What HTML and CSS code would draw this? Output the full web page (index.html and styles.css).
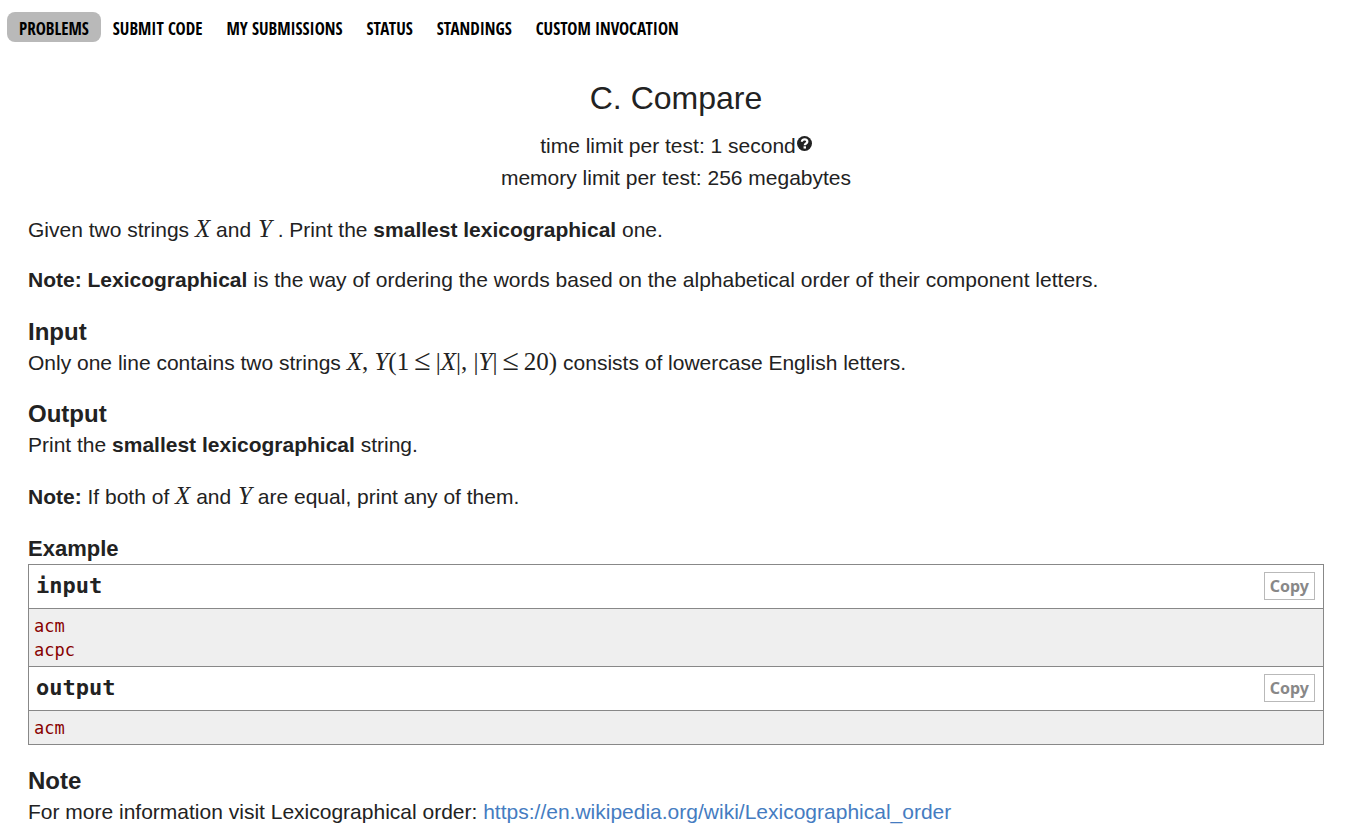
FILE: index.html
```html
<!DOCTYPE html>
<html lang="en">
<head>
<meta charset="utf-8">
<title>C. Compare</title>
<link rel="stylesheet" href="styles.css">
</head>
<body>
<nav class="menu">
  <a class="menu-link current" href="#">PROBLEMS</a>
  <a class="menu-link" href="#">SUBMIT CODE</a>
  <a class="menu-link" href="#">MY SUBMISSIONS</a>
  <a class="menu-link" href="#">STATUS</a>
  <a class="menu-link" href="#">STANDINGS</a>
  <a class="menu-link" href="#">CUSTOM INVOCATION</a>
</nav>
<main class="problem">
  <header class="header">
    <h1 class="title">C. Compare</h1>
    <p class="limit">time limit per test: 1 second<svg class="help" viewBox="0 0 16 16" role="img" aria-label="Help"><circle cx="8" cy="8" r="8" fill="#222"/><path d="M5.200 6.200C5.200 2.600 11 2.800 11 6.200C11 8.200 8.300 7.800 8.300 9.800" fill="none" stroke="#fff" stroke-width="2.400"/><rect x="7" y="11" width="2.600" height="2.400" fill="#fff"/></svg></p>
    <p class="limit">memory limit per test: 256 megabytes</p>
  </header>
  <section class="intro">
    <p class="text">Given two strings <i class="math">X</i> and <i class="math var-y">Y</i> . Print the <b>smallest lexicographical</b> one.</p>
    <p class="text"><b>Note: Lexicographical</b> is the way of ordering the words based on the alphabetical order of their component letters.</p>
  </section>
  <section class="section">
    <h2 class="heading">Input</h2>
    <p class="text">Only one line contains two strings <span class="math"><i>X</i>, <i>Y</i>(1<span class="rel">≤</span>|<i>X</i>|, |<i>Y</i>|<span class="rel">≤</span>20)</span> consists of lowercase English letters.</p>
  </section>
  <section class="section">
    <h2 class="heading">Output</h2>
    <p class="text">Print the <b>smallest lexicographical</b> string.</p>
    <p class="text"><b>Note:</b> If both of <i class="math">X</i> and <i class="math var-y">Y</i> are equal, print any of them.</p>
  </section>
  <section class="section">
    <h2 class="heading small">Example</h2>
    <div class="sample">
      <div class="bar"><h3 class="label">input</h3><button class="copy" type="button">Copy</button></div>
      <pre class="data">acm
acpc</pre>
      <div class="bar"><h3 class="label">output</h3><button class="copy" type="button">Copy</button></div>
      <pre class="data">acm</pre>
    </div>
  </section>
  <section class="section">
    <h2 class="heading">Note</h2>
    <p class="text">For more information visit Lexicographical order: <a class="link" href="https://en.wikipedia.org/wiki/Lexicographical_order">https://en.wikipedia.org/wiki/Lexicographical_order</a></p>
  </section>
</main>
</body>
</html>
```
FILE: styles.css
```css
body { margin: 0; background: #fff; color: #222; font-family: "Liberation Sans", Arial, sans-serif; font-size: 21px; line-height: 32px; }
h1, h2, h3, p, pre { margin: 0; }
.menu { display: flex; padding: 12px 7px 0; }
.menu-link { padding: 4px 12px 0; border-radius: 8px; color: #000; font: bold 17px/26px "Open Sans Condensed", "PT Sans Narrow", "Liberation Sans Narrow", "Open Sans", sans-serif; text-decoration: none; white-space: nowrap; }
.current { background: #b9b9b9; }
.problem { padding: 38px 24px 0 28px; }
.header { margin-bottom: 20px; text-align: center; }
.title { margin-bottom: 14px; font-size: 32px; font-weight: normal; line-height: 36px; }
.help { width: 15px; height: 15px; margin-left: 1px; vertical-align: 2px; }
.text { margin-bottom: 20px; }
.intro { display: grid; gap: 18px; margin-bottom: 21px; }
.intro .text { margin: 0; }
.math { font-family: "Liberation Serif", "Times New Roman", serif; font-size: 25px; line-height: 24px; }
.var-y { margin-left: 1px; }
.rel { margin: 0 5px; font-size: 30px; line-height: 24px; }
.heading { font-size: 24px; line-height: 30px; }
.small { font-size: 22px; line-height: 31px; }
.sample { border: 1px solid #888; margin-bottom: 21px; }
.bar { display: flex; align-items: center; justify-content: space-between; padding: 7px 8px 8px 7px; }
.label { font: bold 22px/28px "DejaVu Sans Mono", monospace; }
.copy { padding: 0 5px; border: 1px solid #b9b9b9; background: #fff; color: #888; font: bold 16px/26px "Noto Sans", sans-serif; }
.data { padding: 5px 5px 4px; border: solid #888; border-width: 1px 0; background: #efefef; color: #880000; font: 17px/24px "DejaVu Sans Mono", monospace; }
.data:last-child { border-bottom: 0; }
.link { color: #457cc1; text-decoration: none; }
```
